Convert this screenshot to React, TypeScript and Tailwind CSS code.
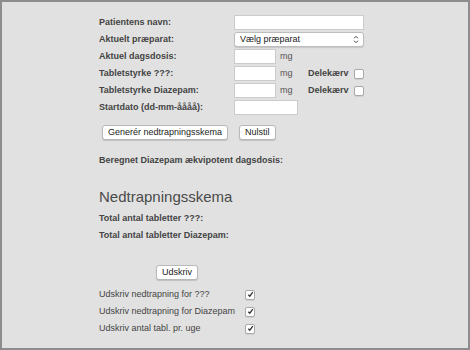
import React from "react";

const font = { fontFamily: '"Liberation Sans", Arial, sans-serif' };

function Field({ label, children }: { label: string; children: React.ReactNode }) {
  return (
    <div className="flex h-[17px] items-center">
      <span className="w-[135px] shrink-0 text-[9px] font-bold text-[#444]">{label}</span>
      {children}
    </div>
  );
}

function TextBox({ w }: { w: string }) {
  return <input type="text" className={`h-[15px] ${w} border border-[#cbcbcb] bg-white`} />;
}

function Box({ checked }: { checked?: boolean }) {
  return (
    <span className="flex h-[10px] w-[10px] items-center justify-center rounded-[2px] border border-[#a9a9a9] bg-white shadow-[0_1px_0_rgba(0,0,0,0.08)]">
      {checked && (
        <svg width="7" height="7" viewBox="0 0 8 8">
          <path d="M1.5 4.3 L3.2 6 L6.6 1.4" fill="none" stroke="#333" strokeWidth="1.5" />
        </svg>
      )}
    </span>
  );
}

function Btn({ children }: { children: React.ReactNode }) {
  return (
    <button className="h-[15px] rounded-[3px] border border-[#b8b8b8] bg-white px-[5px] text-[9px] leading-none text-[#222] shadow-[0_1px_1px_rgba(0,0,0,0.15)]">
      {children}
    </button>
  );
}

export default function App() {
  return (
    <div style={font} className="h-[350px] w-[470px] border-2 border-[#8d8d8d] bg-[#e1e1e1]">
      <div className="pl-[97px] pt-[12px]">
        <div className="flex flex-col">
          <Field label="Patientens navn:">
            <TextBox w="w-[130px]" />
          </Field>
          <Field label="Aktuelt præparat:">
            <div className="flex h-[15px] w-[130px] items-center justify-between rounded-[3px] border border-[#bdbdbd] bg-white pl-[5px] pr-[4px] text-[9px] text-[#222] shadow-[0_1px_1px_rgba(0,0,0,0.12)]">
              <span>Vælg præparat</span>
              <svg width="6" height="9" viewBox="0 0 6 9">
                <path d="M1 3.3 L3 1.3 L5 3.3 M1 5.7 L3 7.7 L5 5.7" fill="none" stroke="#444" strokeWidth="1" />
              </svg>
            </div>
          </Field>
          <Field label="Aktuel dagsdosis:">
            <TextBox w="w-[42px]" />
            <span className="ml-[4px] text-[9px] text-[#555]">mg</span>
          </Field>
          <Field label="Tabletstyrke ???:">
            <TextBox w="w-[42px]" />
            <span className="ml-[4px] w-[28px] text-[9px] text-[#555]">mg</span>
            <span className="text-[9px] font-bold text-[#444]">Delekærv</span>
            <span className="ml-[5px]"><Box /></span>
          </Field>
          <Field label="Tabletstyrke Diazepam:">
            <TextBox w="w-[42px]" />
            <span className="ml-[4px] w-[28px] text-[9px] text-[#555]">mg</span>
            <span className="text-[9px] font-bold text-[#444]">Delekærv</span>
            <span className="ml-[5px]"><Box /></span>
          </Field>
          <Field label="Startdato (dd-mm-åååå):">
            <TextBox w="w-[64px]" />
          </Field>
        </div>

        <div className="mt-[9px] flex gap-[11px] pl-[3px]">
          <Btn>Generér nedtrapningsskema</Btn>
          <Btn>Nulstil</Btn>
        </div>

        <p className="mt-[12px] text-[9px] leading-[17px] font-bold text-[#444]">Beregnet Diazepam ækvipotent dagsdosis:</p>

        <h2 className="mt-[18px] text-[15px] leading-[20px] text-[#4a4a4a]">Nedtrapningsskema</h2>
        <p className="mt-[3px] text-[9px] leading-[17px] font-bold text-[#444]">Total antal tabletter ???:</p>
        <p className="text-[9px] leading-[17px] font-bold text-[#444]">Total antal tabletter Diazepam:</p>

        <div className="mt-[21px] flex pl-[57px]">
          <Btn>Udskriv</Btn>
        </div>

        <div className="mt-[6px] flex flex-col">
          {["Udskriv nedtrapning for ???", "Udskriv nedtrapning for Diazepam", "Udskriv antal tabl. pr. uge"].map((t) => (
            <div key={t} className="flex h-[17px] items-center">
              <span className="w-[146px] whitespace-nowrap text-[9px] text-[#444]">{t}</span>
              <Box checked />
            </div>
          ))}
        </div>
      </div>
    </div>
  );
}
